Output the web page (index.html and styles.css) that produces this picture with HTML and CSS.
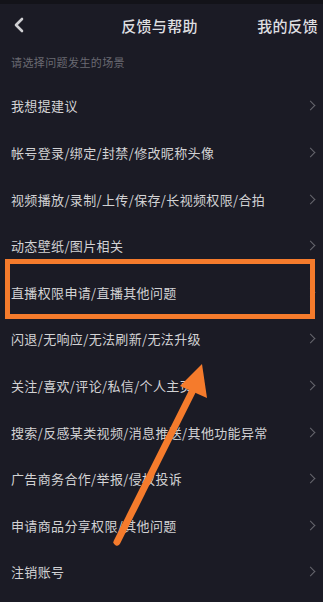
FILE: index.html
```html
<!DOCTYPE html>
<html lang="zh-CN">
<head>
<meta charset="utf-8">
<title>反馈与帮助</title>
<link rel="stylesheet" href="styles.css">
</head>
<body>
<div class="page">
  <div class="topstrip"></div>
  <header class="header">
    <svg class="back" width="12" height="16" viewBox="0 0 12 16"><path d="M9 2 L3 8 L9 14" fill="none" stroke="#cfcfd2" stroke-width="2.6" stroke-linecap="round" stroke-linejoin="round"/></svg>
    <div class="title">反馈与帮助</div>
    <div class="mine">我的反馈</div>
  </header>
  <div class="hint">请选择问题发生的场景</div>
  <ul class="list">
    <li class="row"><span>我想提建议</span><i class="chev"></i></li>
    <li class="row"><span>帐号登录/绑定/封禁/修改昵称头像</span><i class="chev"></i></li>
    <li class="row"><span>视频播放/录制/上传/保存/长视频权限/合拍</span><i class="chev"></i></li>
    <li class="row"><span>动态壁纸/图片相关</span><i class="chev"></i></li>
    <li class="row highlight"><span>直播权限申请/直播其他问题</span><i class="chev"></i></li>
    <li class="row"><span>闪退/无响应/无法刷新/无法升级</span><i class="chev"></i></li>
    <li class="row"><span>关注/喜欢/评论/私信/个人主页</span><i class="chev"></i></li>
    <li class="row"><span>搜索/反感某类视频/消息推送/其他功能异常</span><i class="chev"></i></li>
    <li class="row"><span>广告商务合作/举报/侵权投诉</span><i class="chev"></i></li>
    <li class="row"><span>申请商品分享权限/其他问题</span><i class="chev"></i></li>
    <li class="row"><span>注销账号</span><i class="chev"></i></li>
  </ul>
  <svg class="arrow" width="323" height="602" viewBox="0 0 323 602">
    <line x1="192" y1="392" x2="117" y2="542" stroke="#f57b2c" stroke-width="7" stroke-linecap="round"/>
    <polygon points="202,364 180,386 207,398" fill="#f57b2c"/>
  </svg>
</div>
</body>
</html>
```
FILE: styles.css
```css
* { box-sizing: border-box; }
html, body {
  margin: 0;
  padding: 0;
  background: #1b1b25;
}
body {
  font-family: "Noto Sans CJK SC", "Noto Sans", sans-serif;
  color: #d4d4d6;
}
.page {
  position: relative;
  width: 323px;
  height: 602px;
  overflow: hidden;
  background: #1b1b25;
}
.topstrip {
  height: 4px;
  background: #131319;
}
.header {
  height: 42px;
  display: flex;
  align-items: center;
  position: relative;
  padding: 0 5px 0 13px;
}
.back {
  display: block;
}
.title {
  position: absolute;
  left: 0;
  right: 0;
  text-align: center;
  font-size: 15px;
  font-weight: 500;
  color: #dedee0;
  letter-spacing: 0.3px;
  pointer-events: none;
  padding-right: 4px;
}
.mine {
  margin-left: auto;
  font-size: 15px;
  font-weight: 500;
  color: #dedee0;
  letter-spacing: 0.2px;
}
.hint {
  height: 36.7px;
  padding: 8px 0 0 11px;
  font-size: 11px;
  color: #6a6a72;
  letter-spacing: 0.4px;
}
.list {
  list-style: none;
  margin: 0;
  padding: 0;
}
.row {
  position: relative;
  height: 46.6px;
  display: flex;
  align-items: center;
  padding: 0 7px 0 11px;
  font-size: 13px;
  letter-spacing: 0.35px;
  color: #d2d2d4;
}
.row span {
  flex: 1;
  white-space: nowrap;
}
.chev {
  width: 7px;
  height: 7px;
  border-right: 1.6px solid #66666e;
  border-top: 1.6px solid #66666e;
  transform: rotate(45deg);
  margin-right: 2px;
}
.highlight::after {
  content: "";
  position: absolute;
  left: 5px;
  right: 8px;
  top: -10px;
  bottom: -3px;
  border: 5px solid #f57b2c;
}
.arrow {
  position: absolute;
  left: 0;
  top: 0;
  pointer-events: none;
}
```
